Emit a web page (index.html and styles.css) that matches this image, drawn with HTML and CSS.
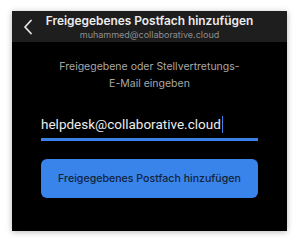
FILE: index.html
```html
<!DOCTYPE html>
<html lang="de">
<head>
<meta charset="utf-8">
<link rel="stylesheet" href="styles.css">
</head>
<body>
<div class="phone">
  <header class="bar">
    <svg class="back" width="10" height="16" viewBox="0 0 10 16"><path d="M8 1.5 L2 8 L8 14.5" fill="none" stroke="#e6e6e6" stroke-width="1.8" stroke-linecap="round" stroke-linejoin="round"/></svg>
    <div class="titles">
      <div class="title">Freigegebenes Postfach hinzufügen</div>
      <div class="sub">muhammed@collaborative.cloud</div>
    </div>
  </header>
  <main class="content">
    <p class="hint">Freigegebene oder Stellvertretungs-<br>E-Mail eingeben</p>
    <div class="field"><span class="val">helpdesk@collaborative.cloud</span><span class="caret"></span></div>
    <button class="btn">Freigegebenes Postfach hinzufügen</button>
  </main>
</div>
</body>
</html>
```
FILE: styles.css
```css
html, body { margin: 0; padding: 0; background: #fff; }
body { width: 300px; height: 243px; overflow: hidden; font-family: Inter, "Liberation Sans", sans-serif; }
.phone {
  margin: 11px 0 0 12px;
  width: 275px;
  height: 220px;
  background: #000;
  box-shadow: 0 1px 6px rgba(0,0,0,0.28);
  display: flex;
  flex-direction: column;
}
.bar {
  height: 31px;
  background: #1e1e1f;
  position: relative;
  display: flex;
  justify-content: center;
}
.back { position: absolute; left: 11px; top: 8px; }
.titles { text-align: center; padding-top: 2px; }
.title { color: #ececec; font-size: 11.9px; font-weight: 600; line-height: 16px; }
.sub { color: #8e8e8e; font-size: 9px; line-height: 11px; }
.content { display: flex; flex-direction: column; align-items: center; }
.hint {
  margin: 16px 0 0;
  color: #a8a8a8;
  font-size: 10.5px;
  line-height: 17px;
  text-align: center;
}
.field {
  margin-top: 18px;
  width: 217px;
  height: 28px;
  border-bottom: 3px solid #3a82e8;
  display: flex;
  align-items: center;
}
.val { color: #ededed; font-family: Roboto, "Liberation Sans", sans-serif; font-size: 13.5px; }
.caret { width: 1.5px; height: 17px; background: #3a82e8; margin-left: 1px; }
.btn {
  margin-top: 18px;
  width: 217px;
  height: 39px;
  border: 0;
  border-radius: 6px;
  background: #3884ea;
  color: #14233a;
  font-family: Inter, "Liberation Sans", sans-serif;
  font-size: 10.6px;
  font-weight: 500;
  padding: 0;
}
```
